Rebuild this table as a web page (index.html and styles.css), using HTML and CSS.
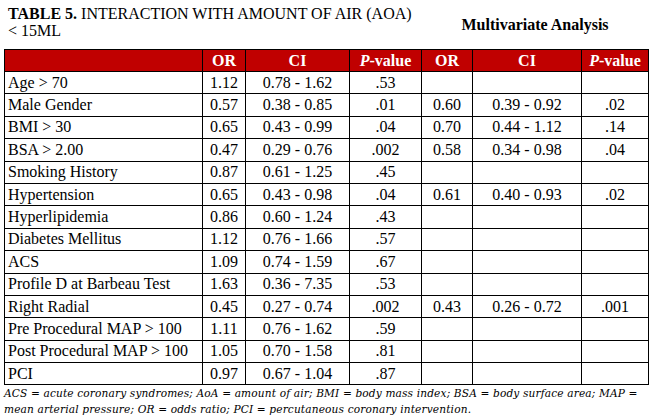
FILE: index.html
```html
<!DOCTYPE html>
<html>
<head>
<meta charset="utf-8">
<link rel="stylesheet" href="styles.css">
</head>
<body>
<div class="page">
  <div class="top">
    <div class="title"><b>TABLE 5.</b> INTERACTION WITH AMOUNT OF AIR (AOA)<br>&lt; 15ML</div>
    <div class="multi">Multivariate Analysis</div>
  </div>
  <table class="data">
    <colgroup>
      <col class="c-name"><col class="c-or"><col class="c-ci"><col class="c-p"><col class="c-or2"><col class="c-ci2"><col class="c-p2">
    </colgroup>
    <thead>
      <tr><th></th><th>OR</th><th>CI</th><th><i>P</i>-value</th><th>OR</th><th>CI</th><th><i>P</i>-value</th></tr>
    </thead>
    <tbody>
      <tr><td class="name">Age &gt; 70</td><td>1.12</td><td>0.78 - 1.62</td><td>.53</td><td></td><td></td><td></td></tr>
      <tr><td class="name">Male Gender</td><td>0.57</td><td>0.38 - 0.85</td><td>.01</td><td>0.60</td><td>0.39 - 0.92</td><td>.02</td></tr>
      <tr><td class="name">BMI &gt; 30</td><td>0.65</td><td>0.43 - 0.99</td><td>.04</td><td>0.70</td><td>0.44 - 1.12</td><td>.14</td></tr>
      <tr><td class="name">BSA &gt; 2.00</td><td>0.47</td><td>0.29 - 0.76</td><td>.002</td><td>0.58</td><td>0.34 - 0.98</td><td>.04</td></tr>
      <tr><td class="name">Smoking History</td><td>0.87</td><td>0.61 - 1.25</td><td>.45</td><td></td><td></td><td></td></tr>
      <tr><td class="name">Hypertension</td><td>0.65</td><td>0.43 - 0.98</td><td>.04</td><td>0.61</td><td>0.40 - 0.93</td><td>.02</td></tr>
      <tr><td class="name">Hyperlipidemia</td><td>0.86</td><td>0.60 - 1.24</td><td>.43</td><td></td><td></td><td></td></tr>
      <tr><td class="name">Diabetes Mellitus</td><td>1.12</td><td>0.76 - 1.66</td><td>.57</td><td></td><td></td><td></td></tr>
      <tr><td class="name">ACS</td><td>1.09</td><td>0.74 - 1.59</td><td>.67</td><td></td><td></td><td></td></tr>
      <tr><td class="name">Profile D at Barbeau Test</td><td>1.63</td><td>0.36 - 7.35</td><td>.53</td><td></td><td></td><td></td></tr>
      <tr><td class="name">Right Radial</td><td>0.45</td><td>0.27 - 0.74</td><td>.002</td><td>0.43</td><td>0.26 - 0.72</td><td>.001</td></tr>
      <tr><td class="name">Pre Procedural MAP &gt; 100</td><td>1.11</td><td>0.76 - 1.62</td><td>.59</td><td></td><td></td><td></td></tr>
      <tr><td class="name">Post Procedural MAP &gt; 100</td><td>1.05</td><td>0.70 - 1.58</td><td>.81</td><td></td><td></td><td></td></tr>
      <tr><td class="name">PCI</td><td>0.97</td><td>0.67 - 1.04</td><td>.87</td><td></td><td></td><td></td></tr>
    </tbody>
  </table>
  <p class="note">ACS = acute coronary syndromes; AoA = amount of air; BMI = body mass index; BSA = body surface area; MAP =<br>mean arterial pressure; OR = odds ratio; PCI = percutaneous coronary intervention.</p>
</div>
</body>
</html>
```
FILE: styles.css
```css
html, body {
  margin: 0;
  padding: 0;
  background: #ffffff;
}
.page {
  padding: 1px 0 0 4px;
  font-family: "Liberation Serif", "Times New Roman", serif;
  color: #000;
  font-size: 16px;
}
.top {
  display: flex;
  align-items: center;
  height: 42px;
  margin-bottom: 6px;
}
.title {
  width: 418px;
  padding-left: 4px;
  line-height: 17px;
  box-sizing: border-box;
  white-space: nowrap;
}
.multi {
  font-weight: bold;
  width: 226px;
  text-align: center;
  padding-top: 5px;
}
.data {
  border-collapse: collapse;
  table-layout: fixed;
  width: 644px;
}
.c-name { width: 198px; }
.c-or { width: 43px; }
.c-ci { width: 104px; }
.c-p { width: 72px; }
.c-or2 { width: 51px; }
.c-ci2 { width: 109px; }
.c-p2 { width: 67px; }
.data th, .data td {
  border: 1px solid #000;
  height: 21.4px;
  padding: 0 3px;
  text-align: center;
  white-space: nowrap;
  line-height: 18px;
}
.data th {
  height: 21px;
  background: #c00000;
  color: #fff;
  font-weight: bold;
}
.data td.name {
  text-align: left;
}
.note {
  margin: 0;
  font-family: "DejaVu Serif", serif;
  font-style: italic;
  font-size: 10.6px;
  letter-spacing: 0.14px;
  line-height: 16px;
  padding-top: 0;
  white-space: nowrap;
}
```
